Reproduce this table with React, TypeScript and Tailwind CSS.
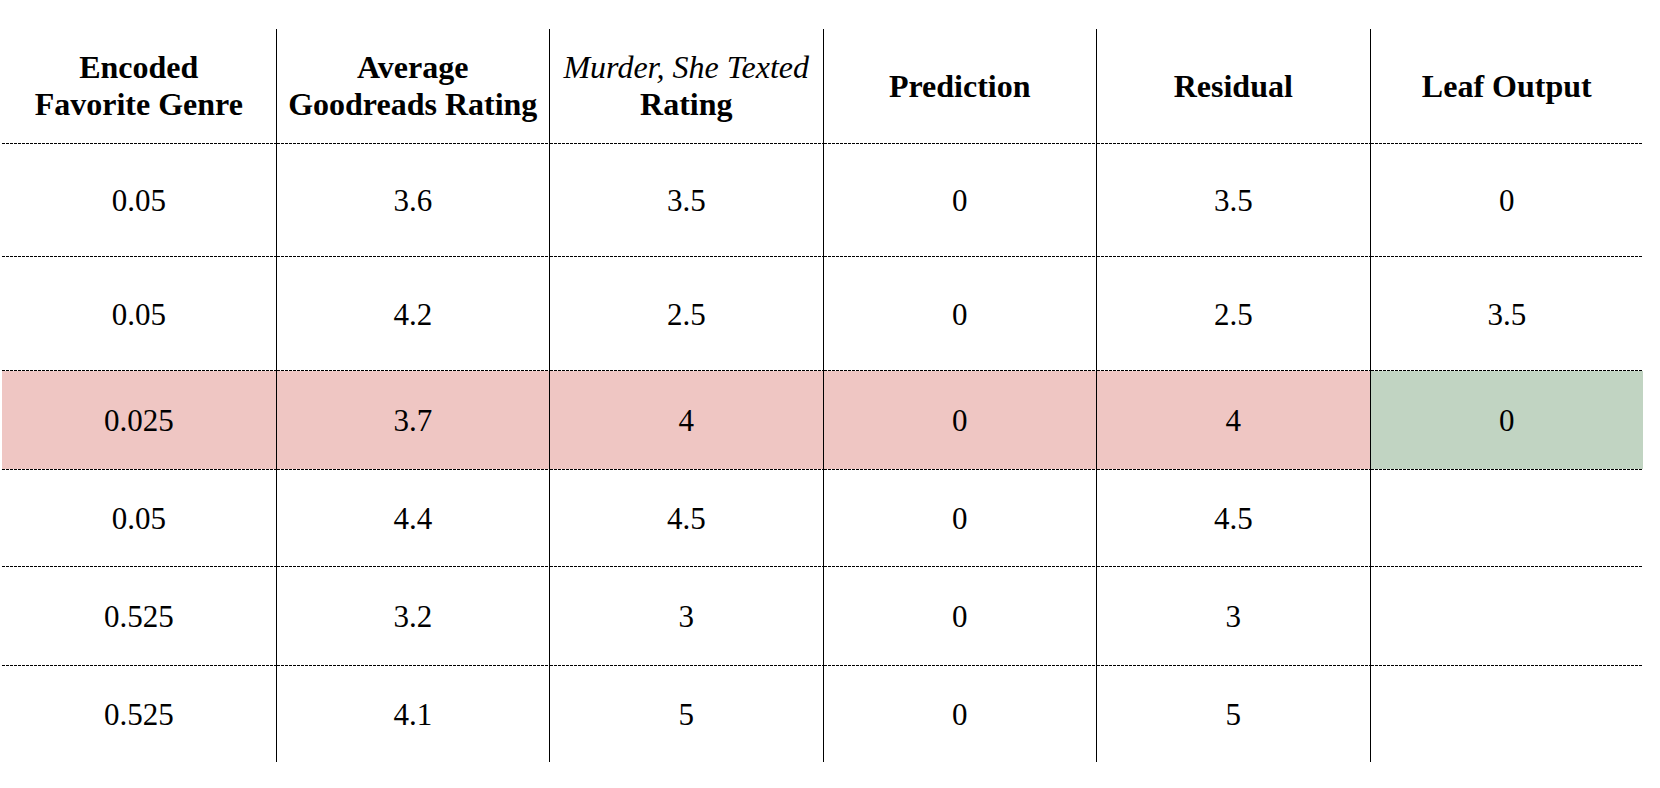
import React from 'react';

type Row = { cells: string[]; h: string; highlight?: boolean };

const rows: Row[] = [
  { cells: ['0.05', '3.6', '3.5', '0', '3.5', '0'], h: 'h-[112px]' },
  { cells: ['0.05', '4.2', '2.5', '0', '2.5', '3.5'], h: 'h-[113px]' },
  { cells: ['0.025', '3.7', '4', '0', '4', '0'], h: 'h-[98px]', highlight: true },
  { cells: ['0.05', '4.4', '4.5', '0', '4.5', ''], h: 'h-[96px]' },
  { cells: ['0.525', '3.2', '3', '0', '3', ''], h: 'h-[98px]' },
  { cells: ['0.525', '4.1', '5', '0', '5', ''], h: 'h-[96px]' },
];

// dotted rule between rows; columns keep their solid left border so the vertical lines stay unbroken
function Rule() {
  return (
    <div className="grid grid-cols-6 h-px">
      {[0, 1, 2, 3, 4, 5].map((i) => (
        <div
          key={i}
          className={`h-px bg-[linear-gradient(to_right,#000_3px,transparent_3px)] bg-[length:4px_1px] bg-repeat-x ${
            i > 0 ? 'border-l border-black' : ''
          }`}
        />
      ))}
    </div>
  );
}

export default function App() {
  return (
    <div className="w-[1660px] h-[788px] bg-white overflow-hidden pt-[29px] pl-[2px] font-['Liberation_Serif','Times_New_Roman',serif] text-black text-[31px]">
      <div className="w-[1641px]">
        {/* Header */}
        <div className="grid grid-cols-6 h-[114px] font-bold text-[32px] leading-[37px]">
          <div className="flex flex-col items-center justify-center text-center">
            <span>Encoded</span>
            <span>Favorite Genre</span>
          </div>
          <div className="flex flex-col items-center justify-center text-center border-l border-black">
            <span>Average</span>
            <span>Goodreads Rating</span>
          </div>
          <div className="flex flex-col items-center justify-center text-center border-l border-black">
            <span className="italic font-normal">Murder, She Texted</span>
            <span>Rating</span>
          </div>
          <div className="flex items-center justify-center border-l border-black">Prediction</div>
          <div className="flex items-center justify-center border-l border-black">Residual</div>
          <div className="flex items-center justify-center border-l border-black">Leaf Output</div>
        </div>

        {rows.map((row, r) => (
          <React.Fragment key={r}>
            <Rule />
            <div className={`grid grid-cols-6 ${row.h}`}>
              {row.cells.map((c, i) => (
                <div
                  key={i}
                  className={`flex items-center justify-center pt-[3px] ${i > 0 ? 'border-l border-black' : ''} ${
                    row.highlight ? (i === 5 ? 'bg-[#c1d4c2]' : 'bg-[#efc6c3]') : ''
                  }`}
                >
                  {c}
                </div>
              ))}
            </div>
          </React.Fragment>
        ))}
      </div>
    </div>
  );
}
